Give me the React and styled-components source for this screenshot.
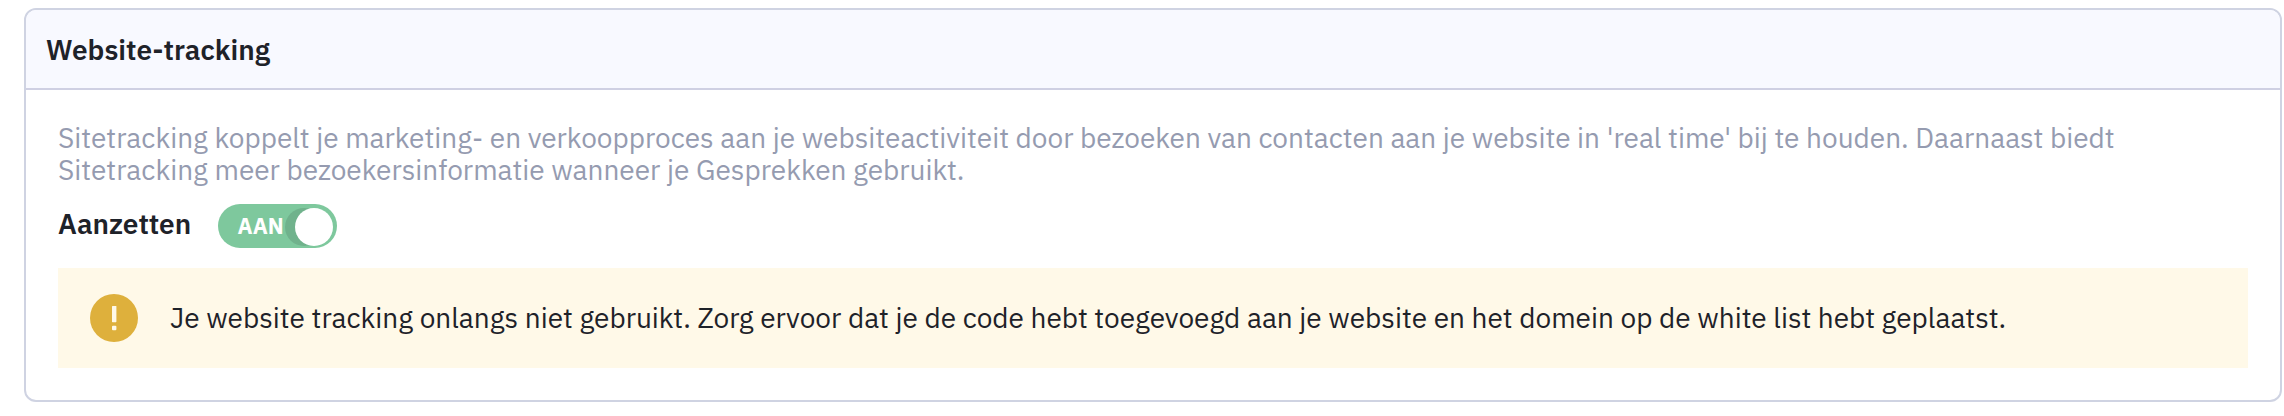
import React, { useState } from "react";
import styled, { createGlobalStyle } from "styled-components";

const GlobalStyle = createGlobalStyle`
  * {
    box-sizing: border-box;
  }

  body {
    margin: 0;
    background: #ffffff;
    color: #1e2229;
    font-family: "IBM Plex Sans", Roboto, "Liberation Sans", sans-serif;
    font-size: 28px;
    line-height: 32px;
  }
`;

const Page = styled.main`
  padding: 8px 2px 14px 24px;
`;

const Card = styled.section`
  height: 394px;
  border: 2px solid #cfd3e2;
  border-radius: 12px;
  background: #ffffff;
  overflow: hidden;
`;

const CardHeader = styled.header`
  display: flex;
  align-items: center;
  height: 80px;
  padding: 2px 20px 0;
  border-bottom: 2px solid #cfd0e3;
  background: #f8f9ff;
`;

const Title = styled.h3`
  margin: 0;
  font-size: 28px;
  font-weight: 600;
  white-space: nowrap;
`;

const CardBody = styled.div`
  padding: 32px;
`;

const Description = styled.p`
  margin: 0;
  color: #959bb0;
  white-space: nowrap;
`;

const Line = styled.span`
  display: block;
`;

const ToggleRow = styled.div`
  display: flex;
  align-items: flex-start;
  margin-top: 18px;
  height: 64px;
`;

const ToggleLabel = styled.span`
  width: 160px;
  padding-top: 4px;
  font-weight: 600;
`;

const Switch = styled.button`
  display: flex;
  align-items: center;
  justify-content: space-between;
  width: 119px;
  height: 44px;
  padding: 0 4px 0 19.5px;
  border: 0;
  border-radius: 22px;
  background: ${({ $on }) => ($on ? "#7ec89d" : "#c1c7d6")};
  color: #ffffff;
  font-family: inherit;
  font-size: 22px;
  font-weight: 700;
  line-height: 44px;
  cursor: pointer;
`;

const Knob = styled.span`
  width: 38px;
  height: 38px;
  margin-top: 2px;
  border-radius: 50%;
  background: #ffffff;
  box-shadow: -10px 0 0 #70b28c;
`;

const Alert = styled.div`
  display: flex;
  align-items: center;
  height: 100px;
  padding: 0 32px;
  background: #fff9e8;
`;

const AlertIcon = styled.svg`
  flex: none;
  width: 48px;
  height: 48px;
  margin-right: 32px;
`;

const AlertText = styled.p`
  margin: 0;
  white-space: nowrap;
`;

const App = () => {
  const [tracking, setTracking] = useState(true);

  return (
    <Page>
      <GlobalStyle />
      <Card>
        <CardHeader>
          <Title>Website-tracking</Title>
        </CardHeader>
        <CardBody>
          <Description>
            <Line>
              Sitetracking koppelt je marketing- en verkoopproces aan je
              websiteactiviteit door bezoeken van contacten aan je website in
              'real time' bij te houden. Daarnaast biedt
            </Line>
            <Line>
              Sitetracking meer bezoekersinformatie wanneer je Gesprekken
              gebruikt.
            </Line>
          </Description>
          <ToggleRow>
            <ToggleLabel>Aanzetten</ToggleLabel>
            <Switch
              type="button"
              role="switch"
              aria-checked={tracking}
              $on={tracking}
              onClick={() => setTracking(!tracking)}
            >
              {tracking ? "AAN" : "UIT"}
              <Knob />
            </Switch>
          </ToggleRow>
          <Alert>
            <AlertIcon viewBox="0 0 48 48">
              <circle cx="24" cy="24" r="24" fill="#deb03c" />
              <rect x="22" y="12" width="4.4" height="16.2" rx="0.6" fill="#fff9e8" />
              <rect x="22" y="31.8" width="4.4" height="4.4" rx="1" fill="#fff9e8" />
            </AlertIcon>
            <AlertText>
              Je website tracking onlangs niet gebruikt. Zorg ervoor dat je de
              code hebt toegevoegd aan je website en het domein op de white list
              hebt geplaatst.
            </AlertText>
          </Alert>
        </CardBody>
      </Card>
    </Page>
  );
};

export default App;
